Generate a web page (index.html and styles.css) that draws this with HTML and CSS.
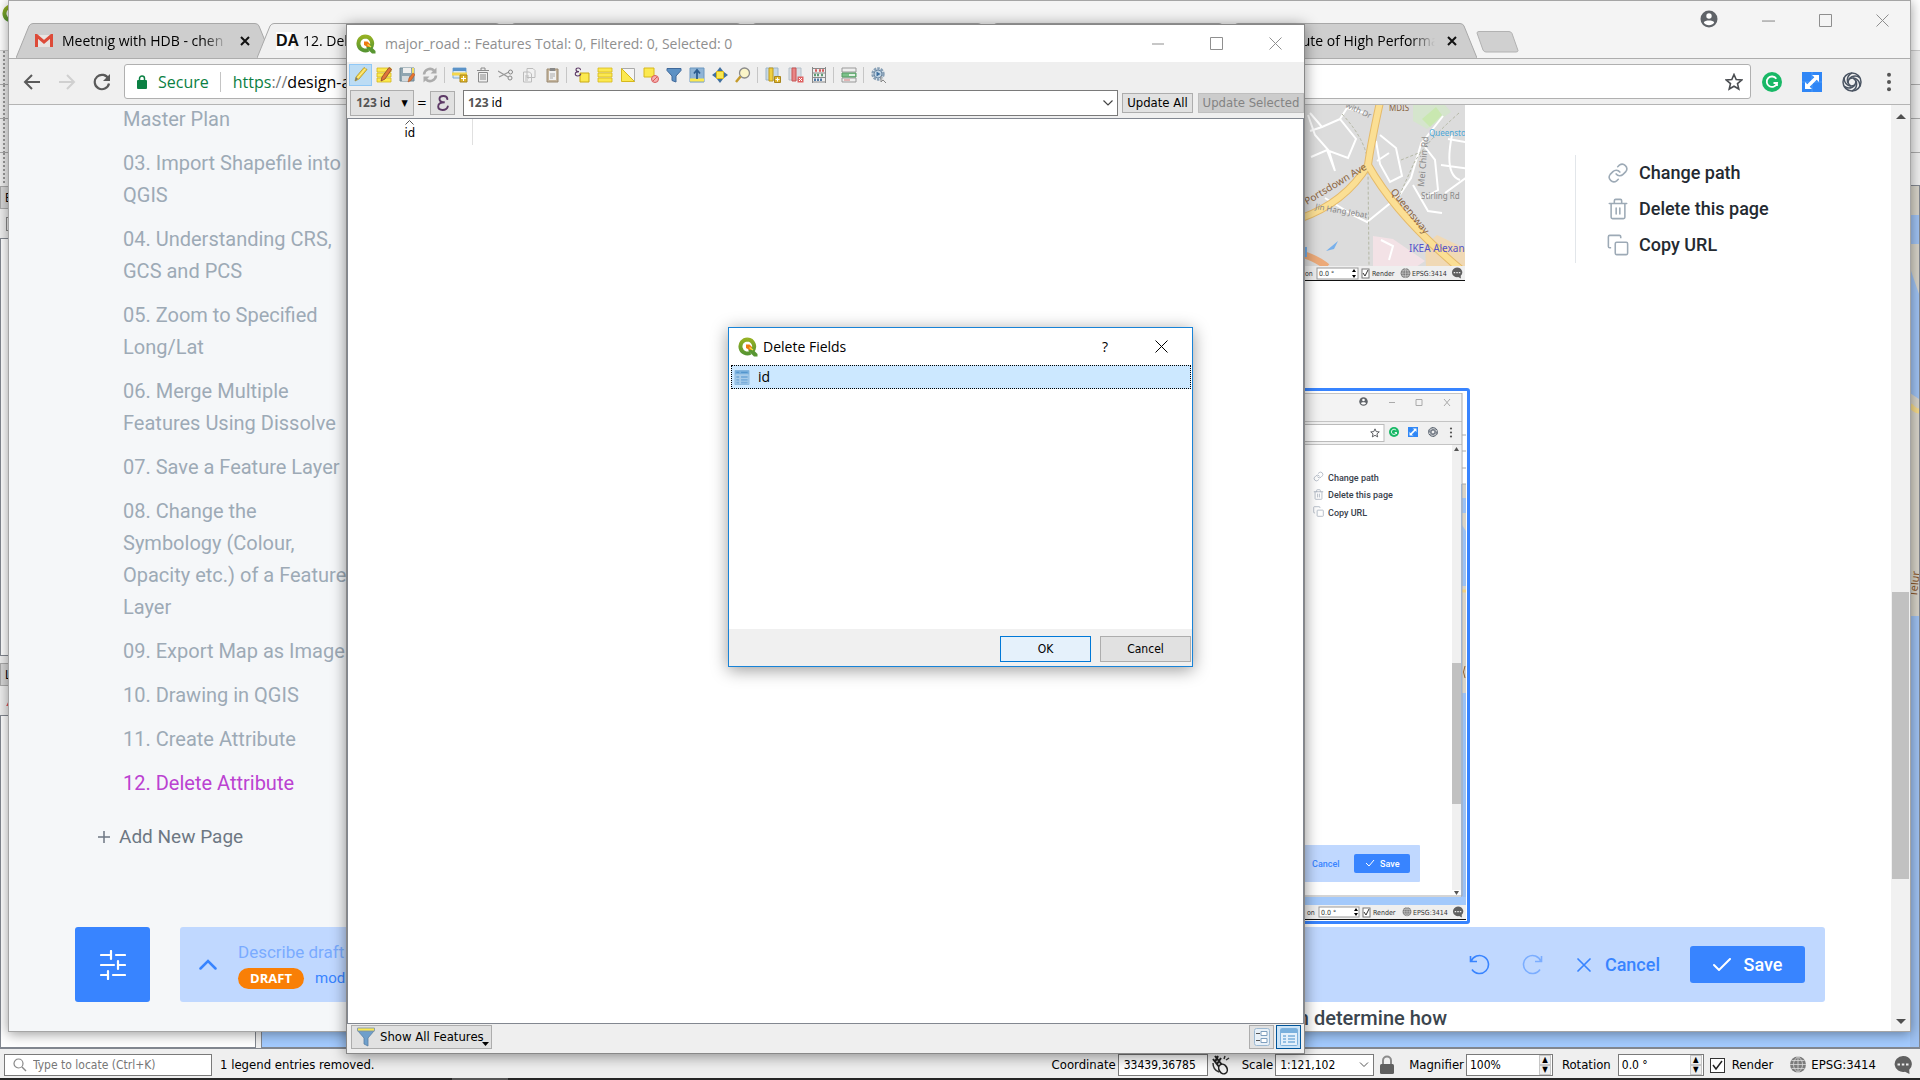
FILE: index.html
```html
<!DOCTYPE html>
<html lang="en">
<head>
<meta charset="utf-8">
<title>Delete Fields</title>
<link rel="stylesheet" href="styles.css">
</head>
<body>
<svg class="defs" width="0" height="0" aria-hidden="true">
  <defs>
    <linearGradient id="ring" x1="0" y1="0" x2="0" y2="1"><stop offset="0" stop-color="#93b023"/><stop offset="1" stop-color="#589632"/></linearGradient>
    <symbol id="qgis" viewBox="0 0 20 20">
      <path d="M9.500 2.500a7 7 0 1 0 3 13.300M14 14.500A7 7 0 0 0 9.500 2.500" fill="none" stroke="url(#ring)" stroke-width="4"/>
      <path d="M10.500 11.500h3.500l5.500 5.500v2.500h-3.500l-5.500-5.500z" fill="#589632"/>
      <path d="M8 7.500h3.500l2.500 2.500v3h-2.500l-3.500-2z" fill="#ee7913"/>
      <path d="M11.500 10.500l3.500 2.500" stroke="#f0e64a" stroke-width="1.500"/>
    </symbol>
    <symbol id="min" viewBox="0 0 12 12"><path d="M0 6.500h12" stroke="currentColor"/></symbol>
    <symbol id="max" viewBox="0 0 13 13"><path d="M.5.5h12v12H.5z" fill="none" stroke="currentColor"/></symbol>
    <symbol id="close" viewBox="0 0 13 13"><path d="M.5.5l12 12M12.500.5l-12 12" stroke="currentColor" fill="none"/></symbol>
    <symbol id="x" viewBox="0 0 10 10"><path d="M1 1l8 8M9 1L1 9" stroke="#111" stroke-width="2"/></symbol>
    <symbol id="tab" viewBox="0 0 256 35"><path d="M0 35L13 3Q14.500.5 17 .5H239Q242 .5 243 3L256 35" fill="currentColor" stroke="#a8a8a8"/></symbol>
    <symbol id="avatar" viewBox="0 0 18 18"><circle cx="9" cy="9" r="8.500" fill="#5f6368"/><circle cx="9" cy="6" r="2.700" fill="#fff"/><path d="M3.800 12.500c1-2.600 9.400-2.600 10.400 0-2 3.500-8.400 3.500-10.400 0z" fill="#fff"/></symbol>
    <symbol id="star" viewBox="0 0 18 18"><path d="M9 1.500l2.200 5 5.500.5-4.200 3.600 1.300 5.400L9 13.200 4.200 16l1.300-5.400L1.300 7l5.500-.5z" fill="none" stroke="#4a4d51" stroke-width="1.600"/></symbol>
    <symbol id="grammarly" viewBox="0 0 20 20"><circle cx="10" cy="10" r="10" fill="#18b866"/><path d="M14.300 6.800A5.200 5.200 0 1 0 15 11h-3.500M15 11v3" stroke="#fff" stroke-width="1.800" fill="none"/></symbol>
    <symbol id="resize" viewBox="0 0 20 20"><rect width="20" height="20" fill="#2f86f6"/><path d="M0 10h20M10 0v20" stroke="#4f9dfa"/><path d="M10 3h7v7l-2.300-2.300-7 7L10 17H3v-7l2.300 2.300 7-7z" fill="#fff"/></symbol>
    <symbol id="swirl" viewBox="0 0 20 20"><g fill="none" stroke="#4b5563" stroke-width="1.500"><circle cx="10" cy="10" r="9"/><path d="M10 1C4 4 4 11 9 14"/><path d="M10 1C4 4 4 11 9 14" transform="rotate(60 10 10)"/><path d="M10 1C4 4 4 11 9 14" transform="rotate(120 10 10)"/><path d="M10 1C4 4 4 11 9 14" transform="rotate(180 10 10)"/><path d="M10 1C4 4 4 11 9 14" transform="rotate(240 10 10)"/><path d="M10 1C4 4 4 11 9 14" transform="rotate(300 10 10)"/></g></symbol>
    <symbol id="dots" viewBox="0 0 6 22"><circle cx="3" cy="3" r="2.200"/><circle cx="3" cy="11" r="2.200"/><circle cx="3" cy="19" r="2.200"/></symbol>
    <symbol id="link" viewBox="0 0 24 24"><path d="M10 13a5 5 0 0 0 7.500.5l3-3a5 5 0 0 0-7-7l-1.800 1.700M14 11a5 5 0 0 0-7.500-.5l-3 3a5 5 0 0 0 7 7l1.800-1.700" fill="none" stroke="currentColor" stroke-width="1.700" stroke-linecap="round"/></symbol>
    <symbol id="trash" viewBox="0 0 24 24"><path d="M2.500 6h19M8 6V3q0-1.500 1.500-1.500h5Q16 1.500 16 3v3M4.500 6v15q0 1.500 1.500 1.500h12q1.500 0 1.500-1.500V6M10 11v6.500M14 11v6.500" fill="none" stroke="currentColor" stroke-width="1.700" stroke-linecap="round"/></symbol>
    <symbol id="copy" viewBox="0 0 24 24"><path d="M4.500 15H3q-1.500 0-1.500-1.500V3Q1.500 1.500 3 1.500h10.500Q15 1.500 15 3v1.500" fill="none" stroke="currentColor" stroke-width="1.700"/><rect x="9" y="9" width="13.500" height="13.500" rx="1.500" fill="none" stroke="currentColor" stroke-width="1.700"/></symbol>
    <symbol id="globe" viewBox="0 0 18 18"><circle cx="9" cy="8.500" r="8" fill="#7b7b7b"/><path d="M9 0v17M1 8.500h16M2.500 4.500h13M2.500 12.500h13M9 .5c-6 4-6 12 0 16M9 .5c6 4 6 12 0 16" stroke="#dcdcdc" fill="none" stroke-width=".8"/></symbol>
    <symbol id="bubble" viewBox="0 0 20 20"><path d="M10 1a8.500 8 0 1 0 2 15.800L16.500 19l-.3-4.300A8.500 8 0 0 0 10 1z" fill="#606060"/><path d="M4.500 9.500h2.500M8.800 9.500h2.500M13 9.500h2.500" stroke="#eee" stroke-width="2.200"/></symbol>
    <symbol id="table" viewBox="0 0 16 16"><path d="M.5.5h15v15H.5z" fill="#a7cbe9" stroke="#8ab8df"/><path d="M.5.5h15v4H.5z" fill="#79b0dd"/><path d="M2 2.500h3M7 2.500h7" stroke="#4a8ec9"/><path d="M2 7.500h3M7 7.500h7M2 10.500h3M7 10.500h7M2 13.500h3M7 13.500h7" stroke="#7aaedb" stroke-width="2"/></symbol>
    <symbol id="ybars" viewBox="0 0 16 16"><path d="M1 1h14v4H1zM1 6h14v4H1zM1 11h14v4H1z" fill="#fce94f" stroke="#d6b81c" stroke-width=".8"/></symbol>
    <symbol id="epsilon" viewBox="0 0 16 20"><path d="M13 5.500C12.500.5 4 1 4 5.500c0 3 3 3.700 6 3.700-4 0-7.500 1-7.500 4.800 0 5 9.500 5.500 11 0" fill="none" stroke="#5d3a66" stroke-width="2.200" stroke-linecap="round"/></symbol>
    <symbol id="filter" viewBox="0 0 18 20"><path d="M1 4h16l-6 7v8l-4-2v-6z" fill="#6f9fcb" stroke="#587fa5" stroke-width=".8"/><path d="M.5 1h17v3H.5z" fill="#fce94f" stroke="#8da0a8"/></symbol>
  </defs>
</svg>

<div class="desktop">
  <!-- Main QGIS window -->
  <div class="qgis">
    <div class="qgis-title"><svg width="20" height="20"><use href="#qgis"/></svg></div>
    <div class="qgis-bars"><i></i><i></i><i></i><i></i></div>
    <div class="qgis-body">
      <div class="panels">
        <div class="panel-name">Browser</div>
        <div class="panel-tools"></div>
        <div class="panel-list tall"></div>
        <div class="panel-name">Layers</div>
        <div class="panel-tools red"></div>
        <div class="panel-list"></div>
      </div>
      <div class="canvas">
        <svg class="canvas-edge" width="9" height="861" viewBox="0 0 9 861">
          <path fill="#d7d3c8" d="M0 0h9v29H0zM0 58h9v50L0 82zM0 207l9 6v217H0z"/>
          <path d="M0 219q5 6 9 6" stroke="#f4d98a" stroke-width="5" fill="none"/>
          <text transform="translate(7 411) rotate(-84)" class="road">Telur</text>
        </svg>
      </div>
    </div>
    <div class="status">
      <label class="locator"><svg width="14" height="14" viewBox="0 0 14 14"><circle cx="5.500" cy="5.500" r="4.500" fill="none" stroke="#888" stroke-width="1.200"/><path d="M9 9l4 4" stroke="#888" stroke-width="1.500"/></svg><input type="text" placeholder="Type to locate (Ctrl+K)" aria-label="Type to locate"></label>
      <span class="message">1 legend entries removed.</span>
      <label for="coord">Coordinate</label><input id="coord" class="box coord" type="text" value="33439,36785">
      <svg class="mouse" width="20" height="20" viewBox="0 0 20 20"><path d="M5 1l11 14M3 4l10 13M8 1l-3 6M11 3L7 9" stroke="#222" stroke-width="2"/><ellipse cx="13" cy="14" rx="4" ry="5" fill="#eee" stroke="#222" stroke-width="1.600" transform="rotate(-30 13 14)"/><path d="M3 8q0 7 6 9M14 4l1-3M16 5l3-2" stroke="#333" fill="none" stroke-width="1.500"/></svg>
      <label for="scale">Scale</label><select id="scale" class="box scale"><option>1:121,102</option></select>
      <svg class="padlock" width="16" height="20" viewBox="0 0 16 20"><path d="M4 10V5.500a4 4 0 0 1 8 0V10" fill="none" stroke="#8b8b8b" stroke-width="2"/><rect x="1" y="9" width="14" height="10" rx="1.500" fill="#606060"/></svg>
      <label for="mag">Magnifier</label><span class="spin mag"><input id="mag" type="text" value="100%"><span><button aria-label="Increase magnifier">▲</button><button aria-label="Decrease magnifier">▼</button></span></span>
      <label for="rot">Rotation</label><span class="spin rot"><input id="rot" type="text" value="0.0 °"><span><button aria-label="Increase rotation">▲</button><button aria-label="Decrease rotation">▼</button></span></span>
      <input id="render" class="tick" type="checkbox" checked><label class="render" for="render">Render</label>
      <svg class="globe" width="18" height="18"><use href="#globe"/></svg><span>EPSG:3414</span>
      <svg class="bubble" width="20" height="20"><use href="#bubble"/></svg>
    </div>
    <div class="taskbar"></div>
  </div>

  <!-- Browser window -->
  <div class="chrome">
    <div class="strip">
      <div class="tabs">
        <div class="tab"><svg class="shape"><use href="#tab"/></svg><svg class="fav" width="18" height="14" viewBox="0 0 18 14"><path d="M1 1h16v12H1z" fill="#e8e4e2"/><path d="M1.500 13V1.500L9 8l7.500-6.500V13" fill="none" stroke="#dd4b39" stroke-width="3"/></svg><span>Meetnig with HDB - chen</span><svg class="x" width="10" height="10"><use href="#x"/></svg></div>
        <div class="tab active"><svg class="shape"><use href="#tab"/></svg><b class="fav da">DA</b><span>12. Delete Attribute</span></div>
        <div class="tab"><svg class="shape"><use href="#tab"/></svg></div>
        <div class="tab"><svg class="shape"><use href="#tab"/></svg></div>
        <div class="tab"><svg class="shape"><use href="#tab"/></svg></div>
        <div class="tab last"><svg class="shape"><use href="#tab"/></svg><i class="fav"></i><span>Institute of High Performance</span><svg class="x" width="10" height="10"><use href="#x"/></svg></div>
        <svg class="newtab" width="44" height="22" viewBox="0 0 44 22"><path d="M1 2Q1 .5 3 .5h30q2 0 3 2l6 17q0 1.500-2 1.500H10q-2 0-3-2z" fill="#d0d0d0" stroke="#b2b2b2"/></svg>
      </div>
      <div class="controls"><svg width="18" height="18"><use href="#avatar"/></svg><svg width="13" height="13"><use href="#min"/></svg><svg width="13" height="13"><use href="#max"/></svg><svg width="13" height="13"><use href="#close"/></svg></div>
    </div>
    <div class="toolbar">
      <svg width="18" height="16" viewBox="0 0 18 16"><path d="M17 8H2M9 1L2 8l7 7" fill="none" stroke="#5a5a5a" stroke-width="2"/></svg>
      <svg width="18" height="16" viewBox="0 0 18 16"><path d="M1 8h15M9 1l7 7-7 7" fill="none" stroke="#d0d0d0" stroke-width="2"/></svg>
      <svg width="18" height="18" viewBox="0 0 18 18"><path d="M15.500 6A7.200 7.200 0 1 0 16 10.500" fill="none" stroke="#5a5a5a" stroke-width="2.200"/><path d="M17 1v7h-7z" fill="#5a5a5a"/></svg>
      <div class="omni">
        <svg width="10" height="14" viewBox="0 0 10 14"><path d="M2.500 6V3.500a2.500 2.500 0 0 1 5 0V6" fill="none" stroke="#0b8043" stroke-width="1.500"/><rect y="5" width="10" height="9" rx="1" fill="#0b8043"/></svg>
        <span class="secure">Secure</span><i></i><span class="url"><em>https</em><s>://</s>design-automation.net</span>
        <svg class="star" width="18" height="18"><use href="#star"/></svg>
      </div>
      <svg width="20" height="20"><use href="#grammarly"/></svg>
      <svg width="20" height="20"><use href="#resize"/></svg>
      <svg width="20" height="20"><use href="#swirl"/></svg>
      <svg class="dots" width="6" height="20"><use href="#dots"/></svg>
    </div>
    <div class="page">
      <nav class="sidebar">
        <a href="#">Master Plan</a>
        <a href="#">03. Import Shapefile into QGIS</a>
        <a href="#">04. Understanding CRS, GCS and PCS</a>
        <a href="#">05. Zoom to Specified Long/Lat</a>
        <a href="#">06. Merge Multiple Features Using Dissolve</a>
        <a href="#">07. Save a Feature Layer</a>
        <a href="#">08. Change the Symbology (Colour, Opacity etc.) of a Feature Layer</a>
        <a href="#">09. Export Map as Image</a>
        <a href="#">10. Drawing in QGIS</a>
        <a href="#">11. Create Attribute</a>
        <a class="current" href="#">12. Delete Attribute</a>
        <button class="add"><svg width="14" height="14" viewBox="0 0 14 14"><path d="M7 1v12M1 7h12" stroke="currentColor" stroke-width="1.500"/></svg>Add New Page</button>
      </nav>
      <main>
        <svg class="shot" width="165" height="176" viewBox="-5 0 165 176">
          <rect x="-5" width="165" height="176" fill="#dcdcdc"/>
          <path d="M108 0h32l6 7-24 17-14-8z" fill="#d5e5cd"/><path d="M117 14l14-12 6 8-12 12z" fill="#c9e8b0"/>
          <path d="M68 131l20 3 32 22-12 8H68z" fill="#f3e2e6"/><path d="M120 140l12-10 29 14v18h-40z" fill="#f0d9b5"/>
          <g fill="none" stroke="#fff" stroke-width="2"><path d="M5 8l12 14 18-8 16 20-8 19-19-7L10 30 3 10M17 22l-12 4M24 46l6 20M6 52l16-7 8 21M35 14L42 3 60 8M75 30l16 13 6 28-12 6-10-18-4-23M84 48l-12 8M20 93l30 18 12 6 32-26 12-18 10-34 22-28M116 37l14 18 3 30-14 8M143 34l22 4M136 60l29 4M147 30q-8 40 8 45M108 80l15 26 14 2M140 88l25-18M76 135l12 6-4 14"/></g>
          <g fill="none" stroke="#b5b8a6" stroke-dasharray="3 2"><path d="M37 9q28 30 26 57l1 95M154 8q-34 30-45 50l-18 40M96 55l20-8"/></g>
          <path d="M75-3Q66 38 63 60M63 60Q40 98-6 114M63 60Q92 112 160 168" fill="none" stroke="#e5ba6a" stroke-width="8"/><path d="M75-3Q66 38 63 60M63 60Q40 98-6 114M63 60Q92 112 160 168" fill="none" stroke="#fbdf94" stroke-width="6"/>
          <path d="M0 150q14 5 22 12" stroke="#ecaa79" stroke-width="7" fill="none"/><path d="M21 146l12-10-4 8zM0 142h2v10H0z" fill="#77b0ec"/>
          <text x="84" y="6" class="t brown">MDIS</text><text x="40" y="2" class="t" transform="rotate(25 40 2)">with Dr</text><text x="124" y="31" class="t blue">Queensto</text>
          <text x="119" y="82" class="t street" transform="rotate(-85 119 82)">Mei Chin Rd</text><text x="116" y="94" class="t">Stirling Rd</text><text x="10" y="104" class="t" transform="rotate(10 10 104)">Jin Hang Jebat</text>
          <text x="2" y="100" class="t brown road-name" transform="rotate(-31 2 100)">Portsdown Ave</text><text x="85" y="87" class="t brown road-name" transform="rotate(51 85 87)">Queensway</text><text x="104" y="147" class="t ikea">IKEA Alexan</text>
          <rect x="-5" y="161" width="165" height="14" fill="#efefef"/><rect x="12" y="163" width="41" height="11" fill="#fff" stroke="#999"/><path d="M47 167l2-3 2 3zM47 170l2 3 2-3z"/><rect x="57" y="164" width="7" height="9" fill="#fff" stroke="#777"/><path d="M58 168l2 3 3-6" stroke="#333" fill="none"/><use href="#globe" x="95" y="163" width="11" height="11"/><use href="#bubble" x="146" y="162" width="12" height="12"/>
          <text x="0" y="171" class="tiny">on</text><text x="14" y="171" class="tiny">0.0 °</text><text x="67" y="171" class="tiny">Render</text><text x="107" y="171" class="tiny">EPSG:3414</text>
          <path d="M-5 175.500h165" stroke="#111"/>
        </svg>
        <svg class="shot framed" width="164" height="530" viewBox="-4 0 164 530">
          <rect x="-4" width="164" height="530" fill="#fff"/><rect x="154" y="93" width="5" height="413" fill="#9cc1f3"/><path d="M155 93h4v14h-4zM155 122h4v18l-4-6zM155 195h4v107h-4z" fill="#d7d3c8"/><path d="M155 200h4" stroke="#efd080" stroke-width="3"/><path d="M158 275q-3 6 0 12" stroke="#94602c" fill="none"/>
          <path d="M155 44h4M155 60h4M155 77h4M155 93h4" stroke="#aaa"/>
          <rect x="-4" y="2" width="159" height="29" fill="#f3f3f3"/><rect x="-4" y="31" width="159" height="22" fill="#f0f0f0"/><path d="M-4 2.500h159M-4 30.500h159M-4 53.500h159" stroke="#c4c4c4"/><rect x="-6" y="33.500" width="83" height="17" fill="#fff" stroke="#bbb"/>
          <use href="#avatar" x="52" y="6" width="9" height="9"/><path d="M82 11.500h6M109 8.500h6v6h-6zM137 8l6 7M143 8l-6 7" stroke="#aaa" fill="none"/>
          <use href="#star" x="63" y="37" width="10" height="10"/><use href="#grammarly" x="82" y="36" width="10" height="10"/><use href="#resize" x="101" y="36" width="10" height="10"/><use href="#swirl" x="121" y="36" width="10" height="10"/><use href="#dots" x="142" y="36" width="4" height="11" fill="#555"/>
          <rect x="145" y="54" width="9" height="445" fill="#f0f0f0"/><rect x="145" y="272" width="9" height="141" fill="#c1c1c1"/><path d="M147 60l2.500-4 2.500 4z" fill="#555"/>
          <path d="M147 500h5l-2.500 4z" fill="#555"/>
          <g color="#a7b0bd"><use href="#link" x="6" y="80" width="11" height="11"/><use href="#trash" x="6" y="98" width="11" height="11"/><use href="#copy" x="6" y="115" width="11" height="11"/></g>
          <text x="21" y="90" class="mini">Change path</text><text x="21" y="107" class="mini">Delete this page</text><text x="21" y="125" class="mini">Copy URL</text>
          <rect x="-6" y="454" width="119" height="37" rx="1" fill="#c0d8ff"/><rect x="47" y="463" width="56" height="19" rx="2" fill="#3884ff"/><text x="5" y="476" class="mini save-text">Cancel</text><text x="73" y="476" class="mini white">Save</text><path d="M59 472l3 3 5-6" stroke="#fff" fill="none"/>
          <path d="M155 2v503H-4" fill="none" stroke="#aaa"/><rect x="-4" y="506" width="163" height="8" fill="#a3c9fb"/><rect x="-4" y="514" width="163" height="14" fill="#efefef"/><path d="M-4 528.500h163" stroke="#111"/>
          <rect x="12" y="516" width="40" height="10" fill="#fff" stroke="#999"/><path d="M47 520l2-3 2 3zM47 522l2 3 2-3z"/><rect x="56" y="517" width="7" height="9" fill="#fff" stroke="#777"/><path d="M57 521l2 3 3-6" stroke="#333" fill="none"/><use href="#globe" x="95" y="516" width="10" height="10"/><use href="#bubble" x="145" y="515" width="12" height="12"/>
          <text x="0" y="524" class="tiny">on</text><text x="14" y="524" class="tiny">0.0 °</text><text x="66" y="524" class="tiny">Render</text><text x="106" y="524" class="tiny">EPSG:3414</text>
        </svg>
        <h3>n determine how</h3>
      </main>
      <aside>
        <a href="#"><svg width="22" height="22"><use href="#link"/></svg>Change path</a>
        <a href="#"><svg width="22" height="22"><use href="#trash"/></svg>Delete this page</a>
        <a href="#"><svg width="22" height="22"><use href="#copy"/></svg>Copy URL</a>
      </aside>
      <div class="scroll"><i class="up"></i><div></div><i class="down"></i></div>
      <div class="dock">
        <button class="tune" aria-label="Settings"><svg width="26" height="30" viewBox="0 0 26 30"><path d="M1 5h10M16 5h9M11 1v8M1 15h13M18 15h7M18 11v8M1 25h7M13 25h12M8 21v8" stroke="#fff" stroke-width="2.200" stroke-linecap="round"/></svg></button>
        <div class="draft">
          <svg width="18" height="11" viewBox="0 0 18 11"><path d="M1.500 9.500L9 2l7.500 7.500" fill="none" stroke="#3884ff" stroke-width="2.500" stroke-linecap="round"/></svg>
          <div class="draft-text"><p>Describe draft</p><div><b>DRAFT</b><span>modified</span></div></div>
          <button class="icon" aria-label="Undo"><svg width="22" height="22" viewBox="0 0 22 22"><path d="M1.500 2v5.500H8M2 7.500A9 9 0 1 1 3 15.500" fill="none" stroke="#3884ff" stroke-width="1.600"/></svg></button>
          <button class="icon faint" aria-label="Redo"><svg width="22" height="22" viewBox="0 0 22 22"><path d="M20.500 2v5.500H14M20 7.500A9 9 0 1 0 19 15.500" fill="none" stroke="#3884ff" stroke-width="1.600"/></svg></button>
          <button class="cancel"><svg width="14" height="14" viewBox="0 0 14 14"><path d="M1 1l12 12M13 1L1 13" stroke="#3884ff" stroke-width="1.700" stroke-linecap="round"/></svg>Cancel</button>
          <button class="save"><svg width="18" height="13" viewBox="0 0 18 13"><path d="M1 7l5 5L17 1" fill="none" stroke="#fff" stroke-width="2" stroke-linecap="round"/></svg>Save</button>
        </div>
      </div>
    </div>
  </div>

  <!-- Attribute table window -->
  <div class="attr">
    <div class="attr-title"><svg width="20" height="20"><use href="#qgis"/></svg><span>major_road :: Features Total: 0, Filtered: 0, Selected: 0</span>
      <div class="wincon"><svg width="12" height="13"><use href="#min"/></svg><svg width="13" height="13"><use href="#max"/></svg><svg width="13" height="13"><use href="#close"/></svg></div></div>
    <div class="tools">
      <button class="on" aria-label="Toggle editing"><svg viewBox="0 0 16 16"><path d="M2 14l1-4L11 .5l3 2L6 12z" fill="#f5d64a" stroke="#b09428" stroke-width=".8"/><path d="M4.500 11L12.500 1.500" stroke="#fff19a"/><path d="M2 14l3-2-2-2z" fill="#777"/></svg></button>
      <button aria-label="Multi edit"><svg viewBox="0 0 16 16"><use href="#ybars"/><path d="M5 14l1-4 7-9.500 2.500 2L9 12z" fill="#e0763b" stroke="#87432a" stroke-width=".8"/></svg></button>
      <button aria-label="Save edits"><svg viewBox="0 0 16 16"><path d="M1 1h14v13H1z" fill="#8fa5b1" stroke="#6f8894"/><path d="M4 1h8v5H4z" fill="#eee"/><path d="M3 9h7v5H3z" fill="#d5dadd"/><path d="M13 1h2v6h-2z" fill="#f3e06a"/><path d="M9 15l1-4 4-5 2 1.500-4 6z" fill="#e9752e" stroke="#a64c23" stroke-width=".5"/></svg></button>
      <button aria-label="Reload"><svg viewBox="0 0 16 16"><path d="M2 7.500A6 6 0 0 1 12 3.500M14 8.500A6 6 0 0 1 4 12.500" fill="none" stroke="#acacac" stroke-width="2.600"/><path d="M14.500.5v6h-6zM1.500 15.500v-6h6z" fill="#acacac"/></svg></button>
      <i></i>
      <button aria-label="Add feature"><svg viewBox="0 0 16 16"><path d="M1 1h13v10H1z" fill="#d7e7f5" stroke="#7faad2"/><path d="M1 1h13v3H1z" fill="#5b93c8"/><path d="M0 7h15" stroke="#f4d64c" stroke-width="3"/><path d="M8 8h7v7H8z" fill="#e0b628" stroke="#a8851d"/><path d="M11.500 9v5M9 11.500h5" stroke="#fff"/></svg></button>
      <button aria-label="Delete features"><svg viewBox="0 0 16 16"><path d="M2 3.500h12M6 3V1h4v2M3.500 5.500h9V15h-9zM6 7v6M8 7v6M10 7v6" fill="none" stroke="#8a8a8a"/></svg></button>
      <button aria-label="Cut"><svg viewBox="0 0 16 16"><path d="M0 4l10 6M1 10l10-5" stroke="#999" stroke-width="1.300"/><circle cx="12.500" cy="5" r="2" fill="none" stroke="#888"/><circle cx="12" cy="11" r="2" fill="none" stroke="#888"/></svg></button>
      <button aria-label="Copy"><svg viewBox="0 0 16 16"><path d="M6 1.500h6l2 2v7H6zM2.500 5h6l2 2v8h-8z" fill="#f1f1f1" stroke="#bcbcbc"/><path d="M4 9h4M4 11h4M4 13h3" stroke="#bbb"/></svg></button>
      <button aria-label="Paste"><svg viewBox="0 0 16 16"><path d="M3 2h11v13H3z" fill="#c4b49c" stroke="#9a8a72"/><path d="M5 4h7v9H5z" fill="#f1f1f1"/><path d="M6 1h5v3H6z" fill="#888"/><path d="M6 7h5M6 9h5M6 11h3" stroke="#aaa"/></svg></button>
      <i></i>
      <button aria-label="Select by expression"><svg viewBox="0 0 16 16"><path d="M6 6h9v9H6z" fill="#fce94f" stroke="#c9a912"/><use href="#epsilon" width="8" height="10"/></svg></button>
      <button aria-label="Select all"><svg><use href="#ybars"/></svg></button>
      <button aria-label="Invert selection"><svg viewBox="0 0 16 16"><path d="M1.500 1.500h13v13z" fill="#f5f5f5" stroke="#aaa"/><path d="M1.500 1.500v13h13z" fill="#fce94f" stroke="#d6b81c"/></svg></button>
      <button aria-label="Deselect all"><svg viewBox="0 0 16 16"><path d="M1 1h10v9H1z" fill="#fce94f" stroke="#d6b81c"/><circle cx="12" cy="12" r="3.500" fill="#f5b1b1" stroke="#d85a5a"/><path d="M10 14l4-4" stroke="#d85a5a"/></svg></button>
      <button aria-label="Filter"><svg viewBox="0 0 16 16"><path d="M1 1.500h14v2L10 9v6l-4-1.500V9L1 3.500z" fill="#5d91c4" stroke="#40699a"/></svg></button>
      <button aria-label="Move selection to top"><svg viewBox="0 0 16 16"><path d="M1 1h14v14H1z" fill="#8fb4d6" stroke="#6d97bf"/><path d="M1 11.500h14v3H1z" fill="#fce94f"/><path d="M8 12V4M5 6.500L8 3l3 3.500" stroke="#2c5c90" stroke-width="1.800" fill="none"/></svg></button>
      <button aria-label="Pan to selection"><svg viewBox="0 0 16 16"><path d="M4.500 4.500h7v7h-7z" fill="#fce94f" stroke="#d6b81c"/><path d="M8 0l3 4H5zM8 16l3-4H5zM0 8l4-3v6zM16 8l-4-3v6z" fill="#42709f"/></svg></button>
      <button aria-label="Zoom to selection"><svg viewBox="0 0 16 16"><circle cx="9.500" cy="6" r="5" fill="#fbf5c8" stroke="#8b8b8b" stroke-width="1.300"/><path d="M5.500 9.500L1 15" stroke="#c59b2a" stroke-width="2.500"/></svg></button>
      <i></i>
      <button aria-label="New field"><svg viewBox="0 0 16 16"><path d="M1 1h12v12H1z" fill="#c6d8e6" stroke="#9db5c8"/><path d="M4 1h4v13H4z" fill="#f0cf41" stroke="#bd9a20"/><path d="M9.500 9.500h6v6h-6z" fill="#dfb52a" stroke="#a8851d"/><path d="M12.500 10.500v4M10.500 12.500h4" stroke="#fff"/></svg></button>
      <button aria-label="Delete field"><svg viewBox="0 0 16 16"><path d="M1 1h12v12H1z" fill="#d9dfe5" stroke="#b3bfc9"/><path d="M4 1h4v13H4z" fill="#e88686" stroke="#c85454"/><path d="M9.500 9.500h6v6h-6z" fill="#df6262"/><path d="M11 11l3 3M14 11l-3 3" stroke="#fff"/></svg></button>
      <button aria-label="Field calculator"><svg viewBox="0 0 16 16"><path d="M1.500 0v16M14.500 0v16M1 1.500h14M1 6h14M1 10.500h14M1 15h14" stroke="#8a8a8a" fill="none"/><path d="M4 3.500h2M8 3.500h5" stroke="#d35b5b" stroke-width="2.500" stroke-dasharray="2 1"/><path d="M3 8h5M10 8h3" stroke="#5f9b74" stroke-width="2.500" stroke-dasharray="2 1"/><path d="M3 12.800h9" stroke="#527aa5" stroke-width="2.500" stroke-dasharray="2 1"/></svg></button>
      <i></i>
      <button aria-label="Conditional formatting"><svg viewBox="0 0 16 16"><path d="M1 1h14v4H1zM1 11h14v4H1z" fill="#eee" stroke="#999"/><path d="M1 6h14v4H1z" fill="#7cc28a" stroke="#569b65"/><path d="M8 8h6" stroke="#fff" stroke-width="1.500"/><path d="M3 13h6" stroke="#d67b7b"/></svg></button>
      <i></i>
      <button aria-label="Actions"><svg viewBox="0 0 16 16"><circle cx="7" cy="7" r="5.500" fill="#dbe6ef" stroke="#88a0b6" stroke-width="2.400" stroke-dasharray="2.500 1"/><circle cx="7" cy="7" r="4" fill="#c3d6e6" stroke="#6c88a2"/><path d="M5.500 4.500v5l4-2.500z" fill="#3d6e9d"/><path d="M10 9v6l2-2 3 3" fill="#ddd" stroke="#888"/></svg></button>
    </div>
    <div class="calc">
      <button class="field"><b>123</b>id<span>▼</span></button><span class="eq">=</span>
      <button class="eps" aria-label="Expression"><svg width="14" height="18"><use href="#epsilon"/></svg></button>
      <button class="expr"><b>123</b>id<svg width="10" height="6" viewBox="0 0 10 6"><path d="M.5.5L5 5 9.500.5" fill="none" stroke="#444" stroke-width="1.200"/></svg></button>
      <button class="upd">Update All</button><button class="upd sel" disabled>Update Selected</button>
    </div>
    <div class="grid"><table><thead><tr><th><svg width="9" height="5" viewBox="0 0 9 5"><path d="M.5 4.500l4-4 4 4" fill="none" stroke="#555"/></svg>id</th></tr></thead></table></div>
    <div class="foot">
      <button class="show"><svg width="18" height="20"><use href="#filter"/></svg>Show All Features<svg class="caret" width="7" height="4" viewBox="0 0 7 4"><path d="M0 0h7L3.500 4z"/></svg></button>
      <button class="view" aria-label="Form view"><svg width="16" height="18" viewBox="0 0 16 18"><rect x=".5" y=".5" width="15" height="17" rx="2" fill="#e8f0f7" stroke="#9db9d2"/><path d="M7 3.500h6v4H7zM7 10.500h6v4H7z" fill="#fff" stroke="#7f9fbe"/><path d="M2 5.500h4M2 12.500h4" stroke="#555"/></svg></button>
      <button class="view picked" aria-label="Table view"><svg width="18" height="18" viewBox="0 0 18 18"><rect x=".5" y=".5" width="17" height="17" rx="1" fill="#e3f0fb" stroke="#7fb2dd"/><path d="M1 1h16v4H1z" fill="#79b0dd"/><path d="M3 8h3M8 8h7M3 11h3M8 11h7M3 14h3M8 14h7" stroke="#7aaedb" stroke-width="1.500"/></svg></button>
    </div>
  </div>

  <!-- Delete Fields dialog -->
  <div class="dialog" role="dialog" aria-label="Delete Fields">
    <div class="dlg-title"><svg width="20" height="20"><use href="#qgis"/></svg><span>Delete Fields</span><div class="dlg-con"><button aria-label="Help">?</button><button aria-label="Close"><svg width="13" height="13"><use href="#close"/></svg></button></div></div>
    <ul><li><svg width="16" height="15"><use href="#table"/></svg>id</li></ul>
    <div class="dlg-foot"><button class="ok">OK</button><button>Cancel</button></div>
  </div>
</div>
</body>
</html>
```
FILE: styles.css
```css
* { box-sizing: border-box; }
body { margin: 0; color: #000; font: 13px/16px "DejaVu Sans Condensed", "DejaVu Sans", sans-serif; }
button, input, select { font: inherit; color: inherit; margin: 0; padding: 0; border: 0; background: none; border-radius: 0; }
button { display: flex; align-items: center; justify-content: center; }
a { color: inherit; text-decoration: none; }
svg { display: block; flex: none; }
.defs { position: absolute; }
.desktop { position: relative; height: 100vh; min-height: 1000px; overflow: hidden; }

/* main QGIS window */
.qgis { height: 100%; display: flex; flex-direction: column; background: #efefef; }
.qgis-title { height: 51px; background: #fff; padding: 4px 2px; border-bottom: 1px solid #ccc; }
.qgis-bars i { display: block; height: 34px; border-bottom: 1px solid #aaa; background: radial-gradient(circle, #999 1px, transparent 1px) 2px 3px / 4px 4px repeat-y; }
.qgis-bars { height: 136px; overflow: hidden; }
.qgis-body { flex: 1; display: flex; gap: 5px; border-bottom: 1px solid #828790; }
.panels { width: 256px; display: flex; flex-direction: column; }
.panel-name { height: 23px; margin-top: 1px; padding: 3px 4px; background: #d7d7d7; border: 1px solid #aaa; font-size: 12px; }
.panel-tools { height: 29px; padding: 8px 6px; }
.panel-tools::before { content: ""; display: block; width: 12px; height: 12px; border: 1px solid #888; }
.panel-tools.red::before { border-width: 0; background: #e05b5b; clip-path: polygon(50% 0, 100% 100%, 0 100%); }
.panel-list { flex: 1; background: #fff; border: 1px solid #828790; }
.panel-list.tall { flex: none; height: 418px; margin-bottom: 6px; }
.canvas { flex: 1; background: #a3cbff; display: flex; justify-content: flex-end; border: 1px solid #828790; }
.canvas-edge { background: #9fc2f2; }
.road { font: 11px "Noto Sans", sans-serif; fill: #8c572b; }
.status { height: 29px; display: flex; align-items: center; padding: 3px 7px 0 4px; }
.status input, .status select { font-size: 12px; }
.locator { width: 208px; height: 22px; display: flex; align-items: center; gap: 6px; padding-left: 8px; background: #fff; border: 1px solid #7a7a7a; }
.locator input { flex: 1; min-width: 0; outline: 0; }
.locator input::placeholder { color: #777; opacity: 1; }
.message { margin: 0 auto 0 8px; }
.box, .spin { height: 22px; margin-left: 2px; background: #fff; border: 1px solid #7a7a7a; padding-left: 5px; }
.coord { width: 90px; }
.mouse { margin: 0 12px 0 2px; }
.scale { width: 99px; appearance: none; padding: 0 0 0 4px; background: #fff url("data:image/svg+xml,%3Csvg xmlns='http://www.w3.org/2000/svg' width='10' height='6'%3E%3Cpath d='M1 .5l4 4 4-4' fill='none' stroke='%23555'/%3E%3C/svg%3E") no-repeat right 4px center; }
.padlock { margin: 0 14px 0 5px; }
.spin { display: flex; padding: 0 1px 0 3px; }
.spin input { flex: 1; min-width: 0; }
.spin > span { width: 12px; display: flex; flex-direction: column; }
.spin button { flex: 1; font-size: 8px; line-height: 8px; background: #eee; border: 1px solid #c6c6c6; }
.spin.mag { width: 87px; margin-right: 9px; }
.spin.rot { width: 86px; margin: 0 6px 0 7px; }
.tick { appearance: none; width: 15px; height: 15px; background: #fff; border: 1px solid #333; }
.tick:checked { background: #fff url("data:image/svg+xml,%3Csvg xmlns='http://www.w3.org/2000/svg' width='13' height='13'%3E%3Cpath d='M2 6l3 4 6-8' fill='none' stroke='%23222' stroke-width='1.500'/%3E%3C/svg%3E"); }
.render { margin: 0 16px 0 7px; }
.globe { margin-right: 4px; }
.bubble { margin-left: 17px; }
.taskbar { height: 2px; background: linear-gradient(90deg, #262626 452px, #555 452px, #555 508px, #262626 508px); }

/* browser window */
.chrome { position: absolute; z-index: 0; inset: 0 9px 48px 8px; display: flex; flex-direction: column; background: #fff; border: 1px solid #a5a5a5; box-shadow: 0 2px 12px rgba(0, 0, 0, .4); font-family: "Open Sans", "Noto Sans", sans-serif; font-size: 14px; }
.strip { height: 58px; display: flex; justify-content: space-between; background: #f4f4f4; border-bottom: 1px solid #adadad; }
.tabs { display: flex; align-items: flex-end; padding-left: 7px; }
.tab { position: relative; width: 256px; height: 35px; display: flex; align-items: center; padding: 0 22px 0 19px; color: #cecece; }
.tab + .tab { margin-left: -15px; }
.tab > * { position: relative; }
.tab .shape { position: absolute; inset: 0; width: 256px; height: 35px; }
.tab.active { color: #f0f0f0; z-index: 1; }
.tab span { flex: 1; min-width: 0; overflow: hidden; white-space: nowrap; color: #000; line-height: 20px; margin-right: 12px; mask-image: linear-gradient(90deg, #000 85%, transparent); }
.tab.last { padding: 0 20px 0 21px; }
.fav { width: 18px; margin-right: 9px; }
.da { color: #111; background: #fff; text-align: center; font: bold 16px/18px "Liberation Sans Narrow", "Liberation Sans", sans-serif; }
.newtab { margin: 0 0 5px -1px; }
.controls { display: flex; gap: 44px; padding: 9px 21px 0 0; color: #8e8e8e; align-items: flex-start; }
.controls svg + svg { margin-top: 4px; }
.toolbar { height: 46px; display: flex; align-items: center; gap: 20px; padding: 0 18px 0 14px; background: #f0f0f0; border-bottom: 1px solid #b4b4b4; }
.toolbar > svg:nth-child(-n+3) { margin-right: -3px; }
.toolbar .dots { margin-left: 4px; fill: #555; }
.omni { flex: 1; height: 35px; margin: 0 -9px 0 -4px; display: flex; align-items: center; padding: 0 7px 0 12px; background: #fff; border: 1px solid #b0b0b0; border-radius: 3px; font-size: 16px; }
.secure { margin-left: 11px; color: #0b8043; }
.omni i { height: 20px; border-left: 1px solid #c4c4c4; margin: 0 12px 0 11px; }
.url em { color: #0b8043; font-style: normal; }
.url s { color: #777; text-decoration: none; }
.star { margin-left: auto; }
.page { position: relative; flex: 1; min-height: 0; overflow: hidden; display: grid; grid-template-columns: 350px 1fr 421px 19px; font-family: Roboto, sans-serif; font-size: 18px; }
.sidebar { display: flex; flex-direction: column; gap: 12px; margin-top: -2px; padding: 0 0 0 114px; background: #f5f7f9; color: #9daab6; font-size: 20px; line-height: 32px; }
.sidebar a { width: 230px; }
.sidebar .current { color: #bb42d1; }
.add { align-self: flex-start; gap: 8px; margin: 10px 0 0 -26px; color: #6d7783; font-size: 19px; }
main { display: flex; flex-direction: column; align-items: flex-end; min-width: 0; }
.shot { margin-right: 5px; }
.framed { width: 170px; height: 536px; margin: 107px 0 0; border: 3px solid #3884ff; border-radius: 3px; }
main h3 { margin: 79px 23px 0 0; font-size: 20px; line-height: 30px; font-weight: 500; color: #3b454e; white-space: nowrap; }
.t { font: 8px "Noto Sans", sans-serif; fill: #888; }
.t.street { font-size: 9px; }
.t.brown { fill: #8a6440; }
.t.road-name { font-size: 10px; }
.t.blue { fill: #4ba7d8; }
.t.ikea { font-size: 10px; fill: #5353c9; }
.tiny { font: 7px "DejaVu Sans Condensed", sans-serif; fill: #333; }
.mini { font: 500 9px Roboto, sans-serif; fill: #38414b; }
.mini.save-text { fill: #3884ff; }
.mini.white { fill: #fff; }
aside { align-self: start; margin: 50px 0 0 105px; padding-left: 31px; border-left: 1px solid #e2e6ea; font-weight: 500; line-height: 36px; color: #242a31; }
aside a { display: flex; align-items: center; gap: 10px; }
aside svg { color: #9daab6; }
.scroll { background: #f1f1f1; display: flex; flex-direction: column; align-items: center; padding: 9px 0 9px; }
.scroll div { width: 17px; height: 31.500%; margin-top: 473px; background: #c1c1c1; }
.scroll i { border: 5px solid transparent; }
.scroll .up { border-top: 0; border-bottom-color: #505050; }
.scroll .down { margin-top: auto; border-bottom: 0; border-top-color: #505050; }
.dock { position: absolute; left: 66px; right: 85px; bottom: 29px; height: 75px; display: flex; gap: 30px; }
.tune { width: 75px; background: #3884ff; border-radius: 3px; }
.draft { flex: 1; display: flex; align-items: center; padding: 0 20px 0 19px; background: #c0d8ff; border-radius: 3px; color: #3884ff; }
.draft-text { margin: 0 auto 0 21px; font-size: 17px; }
.draft-text p { margin: 0 0 5px; line-height: 22px; color: #7aabff; }
.draft-text div { display: flex; align-items: center; gap: 11px; font-size: 15px; }
.draft-text b { width: 66px; text-align: center; border-radius: 11px; background: #f97f06; color: #fff; font: 700 13px/21px "Open Sans", sans-serif; }
.icon { margin-right: 30px; }
.faint { opacity: .5; }
.cancel { gap: 14px; margin: 0 30px 0 4px; font-weight: 500; }
.save { width: 115px; height: 37px; gap: 13px; border-radius: 3px; background: #3884ff; color: #fff; font-weight: 500; }

/* attribute table window */
.attr { position: absolute; z-index: 1; left: 346px; top: 24px; bottom: 26px; width: 959px; display: flex; flex-direction: column; background: #efefef; border: 1px solid #888; box-shadow: 0 2px 14px rgba(0, 0, 0, .45); }
.attr-title { height: 37px; display: flex; align-items: center; gap: 9px; padding: 0 22px 0 9px; background: #fff; color: #8f8f8f; font: 14px/20px "Open Sans", "Noto Sans", sans-serif; }
.wincon { margin-left: auto; display: flex; gap: 46px; }
.tools { display: flex; align-items: center; padding: 2px; height: 26px; }
.tools button { width: 23px; height: 22px; }
.tools svg { width: 16px; height: 16px; }
.tools i { width: 1px; height: 16px; margin: 0 3px; background: #c6c6c6; }
.tools .on { background: #bcdcf4; border: 1px solid #90c8f6; }
.calc { height: 30px; display: flex; align-items: center; padding: 0 0 1px 3px; }
.calc b { color: #555; font: 700 12px/16px "Open Sans", sans-serif; margin-right: 3px; }
.field { width: 64px; height: 26px; background: #e1e1e1; border: 1px solid #adadad; }
.field span { font-size: 9px; margin-left: 11px; }
.eq { width: 16px; text-align: center; }
.eps { width: 25px; height: 24px; background: #e1e1e1; border: 1px solid #adadad; }
.expr { flex: 1; height: 26px; margin: 0 4px 0 8px; padding: 0 4px; justify-content: flex-start; background: #fff; border: 1px solid #7a7a7a; }
.expr svg { margin-left: auto; }
.upd { width: 71px; height: 20px; background: #e1e1e1; border: 1px solid #adadad; white-space: nowrap; }
.upd.sel { width: 106px; margin-left: 5px; background: #ccc; border-color: #bfbfbf; color: #838383; }
.grid { flex: 1; background: #fff; border: 1px solid #828790; }
.grid table { border-collapse: collapse; }
.grid th { width: 124px; height: 26px; padding: 1px 0 0; border-right: 1px solid #e0e0e0; font-weight: normal; line-height: 14px; vertical-align: top; }
.grid th svg { margin: 0 auto 1px; }
.foot { height: 29px; display: flex; padding: 1px 3px 0 4px; gap: 2px; }
.show { position: relative; width: 141px; height: 24px; padding: 0 5px; gap: 5px; justify-content: flex-start; margin-right: auto; background: #e1e1e1; border: 1px solid #adadad; white-space: nowrap; }
.caret { position: absolute; right: 2px; bottom: 2px; }
.view { width: 25px; height: 24px; background: #e1e1e1; border: 1px solid #adadad; }
.picked { background: #cce4f7; border-color: #005499; }

/* delete fields dialog */
.dialog { position: absolute; z-index: 2; left: 728px; top: 327px; width: 465px; height: 340px; display: flex; flex-direction: column; background: #fff; border: 1px solid #1883d7; box-shadow: 0 3px 16px rgba(0, 0, 0, .4); }
.dlg-title { height: 37px; display: flex; align-items: center; gap: 5px; padding: 0 24px 0 9px; font: 14px/20px "Open Sans", "Noto Sans", sans-serif; }
.dlg-con { display: flex; gap: 47px; margin-left: auto; }
.dialog ul { flex: 1; margin: 0; padding: 0 1px 0 2px; list-style: none; font: 14px/20px "Open Sans", "Noto Sans", sans-serif; }
.dialog li { height: 24px; display: flex; align-items: center; gap: 8px; padding-left: 2px; background: #cce8ff; border: 1px dotted #000; }
.dlg-foot { height: 37px; display: flex; justify-content: flex-end; gap: 9px; padding: 7px 1px 4px; background: #f0f0f0; font-size: 12px; }
.dlg-foot button { width: 91px; background: #e1e1e1; border: 1px solid #adadad; }
.dlg-foot .ok { background: #e5f1fb; border-color: #0078d7; }
```
